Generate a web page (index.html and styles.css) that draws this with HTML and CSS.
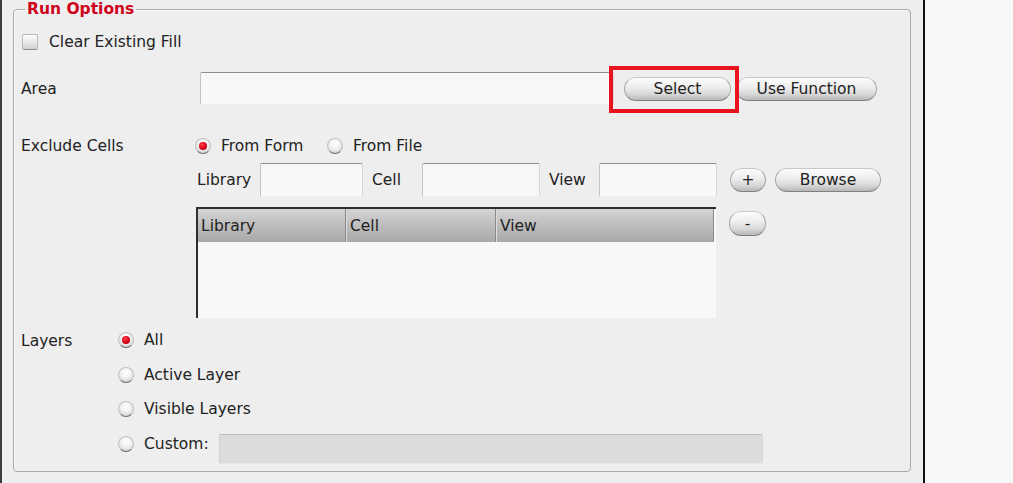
FILE: index.html
```html
<!DOCTYPE html>
<html>
<head>
<meta charset="utf-8">
<link rel="stylesheet" href="styles.css">
</head>
<body>
<div class="panel">
  <fieldset class="group">
    <legend class="legend">Run Options</legend>

    <div class="row row-check">
      <span class="checkbox"></span>
      <span class="txt">Clear Existing Fill</span>
    </div>

    <div class="row row-area">
      <span class="label label-area">Area</span>
      <span class="input area-input"></span>
      <span class="hl-wrap">
        <button class="btn btn-select">Select</button>
        <span class="highlight"></span>
      </span>
      <button class="btn btn-func">Use Function</button>
    </div>

    <div class="row row-excl">
      <span class="label label-excl">Exclude Cells</span>
      <span class="radio on"></span>
      <span class="txt rtxt-form">From Form</span>
      <span class="radio"></span>
      <span class="txt">From File</span>
    </div>

    <div class="row row-lib">
      <span class="txt lib-lbl">Library</span>
      <span class="input lib-input"></span>
      <span class="txt cell-lbl">Cell</span>
      <span class="input cell-input"></span>
      <span class="txt view-lbl">View</span>
      <span class="input view-input"></span>
      <button class="btn btn-plus">+</button>
      <button class="btn btn-browse">Browse</button>
    </div>

    <div class="row row-table">
      <div class="table">
        <div class="thead">
          <span class="th th-lib">Library</span>
          <span class="th th-cell">Cell</span>
          <span class="th th-view">View</span>
        </div>
        <div class="tbody"></div>
      </div>
      <button class="btn btn-minus">-</button>
    </div>

    <div class="layers">
      <span class="label label-layers">Layers</span>
      <div class="layer-opts">
        <div class="lrow"><span class="radio on"></span><span class="txt">All</span></div>
        <div class="lrow"><span class="radio"></span><span class="txt">Active Layer</span></div>
        <div class="lrow"><span class="radio"></span><span class="txt">Visible Layers</span></div>
        <div class="lrow"><span class="radio"></span><span class="txt custom-lbl">Custom:</span><span class="input custom-input"></span></div>
      </div>
    </div>
  </fieldset>
</div>
</body>
</html>
```

FILE: styles.css
```css
* { box-sizing: border-box; }

html, body {
  margin: 0;
  padding: 0;
  background: #f7f8f7;
  font-family: "DejaVu Sans", sans-serif;
  font-size: 15.5px;
  color: #222;
}

.panel {
  width: 925px;
  height: 483px;
  background: #eeeeee;
  border-left: 2px solid #3c3c3c;
  border-right: 2px solid #111;
  overflow: hidden;
}

.group {
  margin: 0 0 0 11px;
  width: 898px;
  height: 472px;
  padding: 0 0 0 7px;
  border: 1px solid #a9a9a9;
  border-radius: 4px;
  box-shadow: inset 1px 1px 0 #fbfbfb;
  display: flex;
  flex-direction: column;
}

.legend {
  margin-left: 4px;
  padding: 0 2px;
  font-weight: bold;
  font-size: 15.5px;
  line-height: 18px;
  color: #d0021b;
}

.row {
  display: flex;
  align-items: center;
  flex: none;
}

.txt {
  flex: none;
  white-space: nowrap;
  line-height: 18px;
}

.label { flex: none; white-space: nowrap; }

/* checkbox row */
.row-check { margin-top: 15px; height: 18px; }
.checkbox {
  width: 16px;
  height: 16px;
  margin-left: 1px;
  margin-right: 11px;
  border: 1px solid #b9b9b9;
  border-bottom-color: #8e8e8e;
  border-radius: 2px;
  background: linear-gradient(#fbfbfb, #e6e6e6 60%, #cfcfcf);
}

/* inputs */
.input {
  display: block;
  flex: none;
  background: #f7f8f7;
  border: 1px solid;
  border-color: #8d8d8d #d6d6d6 #f2f2f2 #c4c4c4;
  border-radius: 2px;
}

/* area row */
.row-area { margin-top: 20px; height: 35px; }
.label-area { width: 179px; }
.area-input { width: 414px; height: 33px; }

.hl-wrap {
  position: relative;
  margin-left: 10px;
  display: flex;
}
.highlight {
  position: absolute;
  left: -15px;
  right: -8px;
  top: -11px;
  bottom: -12px;
  border: 4px solid #e8141e;
}

.btn {
  flex: none;
  font-family: "DejaVu Sans", sans-serif;
  font-size: 15.5px;
  color: #222;
  height: 24px;
  padding: 0;
  border: 1px solid #a8a8a8;
  border-top-color: #c8c8c8;
  border-bottom-color: #808080;
  border-radius: 12px;
  background: linear-gradient(#fdfdfd, #ececec 45%, #d6d6d6 75%, #b8b8b8);
  line-height: 20px;
  text-align: center;
}
.btn-select { width: 107px; }
.btn-func { width: 141px; margin-left: 5px; }

/* exclude cells */
.row-excl { margin-top: 31px; height: 18px; }
.label-excl { width: 174px; }
.rtxt-form { width: 106px; }

.radio {
  flex: none;
  width: 16px;
  height: 16px;
  border-radius: 50%;
  border: 1px solid #c2c2c2;
  border-bottom-color: #6f6f6f;
  background: radial-gradient(circle at 50% 35%, #ffffff 0%, #f1f1f1 45%, #d2d2d2 80%, #a8a8a8 100%);
  margin-right: 10px;
  position: relative;
}
.radio.on::after {
  content: "";
  position: absolute;
  left: 3px;
  top: 3px;
  width: 8px;
  height: 8px;
  border-radius: 50%;
  background: radial-gradient(circle at 40% 35%, #ff4848 0%, #e0001a 50%, #8c0010 100%);
}

/* library row */
.row-lib { margin-top: 8px; height: 34px; padding-left: 176px; }
.lib-lbl { width: 63px; }
.lib-input { width: 103px; height: 34px; }
.cell-lbl { width: 50px; margin-left: 9px; }
.cell-input { width: 118px; height: 34px; }
.view-lbl { width: 50px; margin-left: 9px; }
.view-input { width: 118px; height: 34px; }
.btn-plus { width: 36px; margin-left: 13px; }
.btn-browse { width: 106px; margin-left: 9px; }

/* table row */
.row-table {
  margin-top: 10px;
  height: 111px;
  padding-left: 175px;
  align-items: flex-start;
}
.table {
  width: 520px;
  height: 111px;
  border-top: 2px solid #2e2e2e;
  border-left: 2px solid #2e2e2e;
  background: #f7f8f7;
  flex: none;
}
.thead {
  display: flex;
  height: 33px;
  width: 516px;
  background: linear-gradient(#d4d4d4, #bdbdbd 50%, #a9a9a9);
  border-right: 1px solid #8a8a8a;
}
.th {
  line-height: 34px;
  padding-left: 3px;
  white-space: nowrap;
  border-right: 1px solid #8a8a8a;
  box-shadow: 1px 0 0 #dcdcdc;
}
.th-lib { width: 148px; }
.th-cell { width: 150px; padding-left: 4px; }
.th-view { flex: 1; padding-left: 4px; border-right: none; box-shadow: none; }
.btn-minus { width: 37px; height: 25px; margin-left: 13px; margin-top: 4px; }

/* layers */
.layers {
  display: flex;
  margin-top: 5px;
}
.label-layers {
  width: 97px;
  line-height: 36px;
}
.layer-opts { display: flex; flex-direction: column; }
.lrow {
  display: flex;
  align-items: center;
  height: 34.5px;
}
.custom-lbl { width: 75px; }
.custom-input {
  width: 544px;
  height: 30px;
  margin-top: 10px;
  background: #dcdcdc;
  border-color: #bdbdbd #d8d8d8 #e6e6e6 #d0d0d0;
}
```
